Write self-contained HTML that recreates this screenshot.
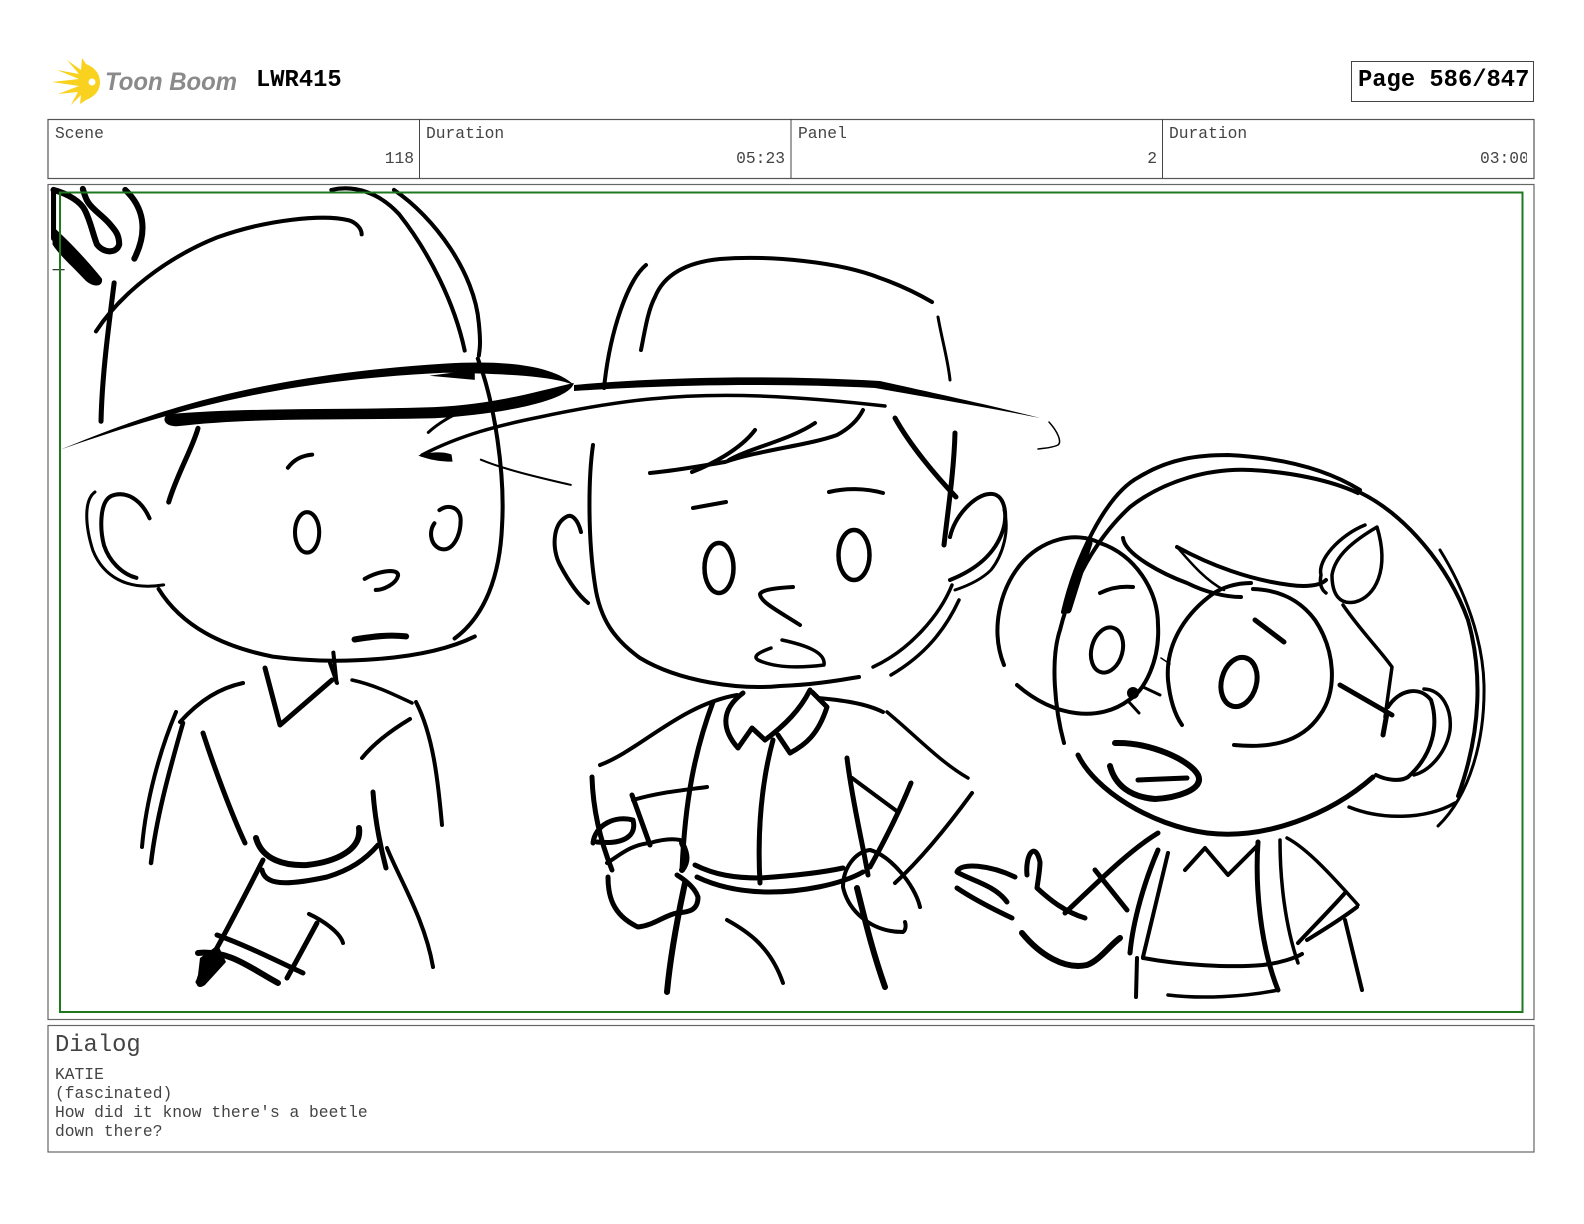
<!DOCTYPE html>
<html lang="en">
<head>
<meta charset="utf-8">
<title>LWR415 Page 586/847</title>
<style>
html,body{margin:0;padding:0;background:#fff;width:1584px;height:1224px;overflow:hidden}
svg{display:block;position:absolute;left:0;top:0}
.t{font-family:"Liberation Mono",monospace;fill:#444;font-size:16.3px}
.b{font-family:"Liberation Mono",monospace;fill:#000;font-size:23.8px;font-weight:bold}
.s{fill:none;stroke:#000;stroke-linecap:round;stroke-linejoin:round}
</style>
</head>
<body>
<svg width="1584" height="1224" viewBox="0 0 1584 1224" xmlns="http://www.w3.org/2000/svg">
<defs><clipPath id="c1"><rect x="1400" y="140" width="127" height="40"/></clipPath></defs>
<rect width="1584" height="1224" fill="#fff"/>

<!-- logo -->
<path fill="#f8d21e" d="M82,58 L86,64 C96,68 100,75 100,82 C100,91 94,97 86,100 L80,104 L81,95 L71,105 L78,92 L58,94 L79,86 L52,82 L79,79 L57,70 L79,74 L67,60 L81,70 Z"/>
<circle cx="92" cy="82" r="3.5" fill="#fff"/>
<text x="105" y="90" font-family="'Liberation Sans',sans-serif" font-style="italic" font-weight="bold" font-size="25" fill="#8a8a8a" textLength="132" lengthAdjust="spacingAndGlyphs">Toon Boom</text>
<text class="b" x="256" y="86">LWR415</text>
<rect x="1351.5" y="61.5" width="182" height="40" fill="none" stroke="#444" stroke-width="1"/>
<text class="b" x="1358" y="86">Page 586/847</text>

<!-- header -->
<rect x="48" y="119.5" width="1486" height="59" fill="none" stroke="#555" stroke-width="1.2"/>
<path d="M419.5,119V178M791,119V178M1162.5,119V178" stroke="#444" stroke-width="1" fill="none"/>
<text class="t" x="55" y="138">Scene</text>
<text class="t" x="414" y="163" text-anchor="end">118</text>
<text class="t" x="426" y="138">Duration</text>
<text class="t" x="785" y="163" text-anchor="end">05:23</text>
<text class="t" x="798" y="138">Panel</text>
<text class="t" x="1157" y="163" text-anchor="end">2</text>
<text class="t" x="1169" y="138">Duration</text>
<g clip-path="url(#c1)"><text class="t" x="1480" y="163">03:00</text></g>

<!-- panel -->
<rect x="48" y="184.5" width="1486" height="835" fill="none" stroke="#666" stroke-width="1.2"/>

<g transform="scale(1.0102)">
<g class="s" stroke-width="6">
<path d="M53,188 C68,192 80,200 84,208 C90,220 92,232 96,242 C102,250 115,252 118,242 C118,232 114,228 108,221 C100,212 92,208 87,200 C84,195 83,190 82,187"/>
<path d="M53,188 V236" stroke-width="5"/>
<path d="M124,188 C142,205 147,228 133,256"/>
<path d="M196,424 C190,445 175,470 167,497" stroke-width="5"/>
<path d="M309,450 C298,451 290,456 285,463" stroke-width="4"/>
</g>
<path fill="#000" d="M52,224 C70,240 90,262 101,276 C102,285 92,284 85,278 C72,264 60,254 52,242Z"/>
<path d="M52,267 H64" stroke="#000" stroke-width="1"/>
<g class="s" stroke-width="4">
<path d="M95,328 C120,290 165,255 215,235 C265,217 320,212 345,218 C352,220 358,226 358,232"/>
<path d="M113,280 C108,320 101,370 100,417" stroke-width="5"/>
<path d="M328,188 C350,183 375,190 395,212 C425,250 450,300 460,347"/>
<path d="M390,188 C430,215 470,270 474,320 C476,340 475,345 474,352"/>
<path d="M473,355 C490,400 500,470 497,520 C495,570 480,610 450,632"/>
<path d="M157,583 C180,620 220,640 270,650 C330,658 420,655 470,630"/>
<path d="M94,487 C83,495 84,520 92,545 C102,570 125,585 162,579" stroke-width="3"/>
<path d="M148,513 C140,495 125,485 110,491 C98,497 99,525 103,540 C108,555 120,568 135,572"/>
<ellipse cx="304" cy="527" rx="12" ry="20"/>
<path d="M430,518 C425,525 425,538 435,543 C448,548 456,530 456,515 C456,503 445,498 435,505"/>
<path d="M361,573 C375,565 395,562 394,570 C392,578 380,584 372,584"/>
<path d="M351,633 C370,630 385,628 402,630" stroke-width="6"/>
<path d="M330,646 L333,675" stroke-width="4"/>
<path d="M476,455 C500,465 535,473 565,480" stroke-width="2"/>
<path d="M424,428 C435,418 450,410 462,405" stroke-width="3"/>
</g>
<path fill="#000" d="M60,445 C150,408 250,372 440,360 C500,356 548,362 568,381 C545,372 500,370 440,369 C300,376 200,396 60,445Z"/>
<path fill="#000" d="M166,410 C250,403 350,406 430,403 C490,400 530,388 568,379 C565,396 500,410 430,414 C340,416 250,413 175,422 C162,422 160,414 166,410Z"/>
<path fill="#000" d="M425,372 L470,366 V376Z"/>
<path fill="#000" d="M414,451 C425,447 440,447 447,450 L448,457 C435,457 425,455 414,451Z"/>
</g>

<!-- everything else, real coords -->
<g class="s" stroke-width="4">
<!-- brim 2 and head 2 -->
<path d="M422,455 C460,435 500,425 540,417 C620,400 680,393 760,396 C810,398 850,402 885,406" stroke-width="3.5"/>
<path d="M646,265 C628,280 610,330 604,388"/>
<path d="M641,350 C645,330 648,310 655,297 C665,272 690,262 720,259 C770,255 840,262 880,278 C900,285 920,295 932,302"/>
<path d="M938,317 C942,340 948,360 950,380" stroke-width="3"/>
<path d="M1049,422 C1058,432 1062,442 1058,445 C1052,448 1045,448 1038,449" stroke-width="1.5"/>
<path d="M593,445 C588,480 588,540 595,585 C600,620 615,640 640,658 C680,682 740,690 780,686 C810,685 835,681 859,677"/>
<path d="M650,473 C680,470 700,466 725,462 C760,450 810,445 837,435 C850,428 858,420 863,410"/>
<path d="M692,472 C710,465 740,450 755,430"/>
<path d="M729,460 C750,448 790,440 815,423"/>
<path d="M895,418 C910,445 935,475 956,497" stroke-width="5"/>
<path d="M955,433 C954,470 948,510 944,545" stroke-width="5"/>
<path d="M950,537 C955,515 975,495 989,494 C1005,492 1008,515 1003,530 C995,555 975,570 950,580"/>
<path d="M1004,510 C1010,530 1003,555 991,570 C983,578 970,585 955,590" stroke-width="3"/>
<path d="M952,585 C940,615 910,650 873,667" stroke-width="3.5"/>
<path d="M959,600 C945,630 925,655 891,675" stroke-width="3.5"/>
<path d="M693,508 L726,502"/>
<path d="M829,492 C845,488 865,488 883,493"/>
<ellipse cx="719" cy="568" rx="14.5" ry="25" stroke-width="4.5"/>
<ellipse cx="854" cy="555" rx="15.5" ry="25" stroke-width="4.5"/>
<path d="M793,587 C775,588 762,590 760,594 C760,602 780,612 800,625"/>
<path d="M771,648 C760,652 752,656 758,660 C775,668 800,668 824,665 C826,652 805,645 782,640" stroke-width="3.5"/>
<path d="M581,532 C578,520 572,513 566,517 C552,525 552,550 560,565 C568,580 578,595 588,603"/>

<!-- body 1 -->
<path d="M265,668 L280,725 L332,680" stroke-width="5"/>
<path d="M330,663 L337,683"/>
<path d="M243,683 C220,688 200,700 180,722"/>
<path d="M176,712 C160,750 146,800 142,847"/>
<path d="M183,723 C168,775 156,820 151,863" stroke-width="4.5"/>
<path d="M352,680 C375,685 395,695 412,703" stroke-width="3.5"/>
<path d="M416,702 C433,735 438,780 442,825"/>
<path d="M410,719 C395,728 375,742 362,758"/>
<path d="M203,733 C215,770 232,815 245,843" stroke-width="5"/>
<path d="M373,792 C375,820 380,845 386,868" stroke-width="5"/>
<path d="M256,838 C262,860 285,866 307,865 C335,862 362,850 359,828" stroke-width="6"/>
<path d="M262,870 C265,885 285,886 327,877 C350,870 365,860 378,845" stroke-width="5"/>
<path d="M387,848 C400,880 425,920 433,967"/>
<path d="M263,860 C245,895 225,935 198,982" stroke-width="5"/>
<path d="M217,935 C245,945 275,960 303,973" stroke-width="5"/>
<path d="M198,953 C230,950 250,968 278,983" stroke-width="6"/>
<path d="M317,923 C305,945 297,960 287,978" stroke-width="5"/>
<path d="M309,914 C322,920 340,932 343,943"/>

<!-- body 2 -->
<path d="M600,765 C640,750 680,705 737,695"/>
<path d="M713,702 C695,750 685,800 682,870" stroke-width="5"/>
<path d="M743,693 C720,710 722,730 738,748 L752,728 L765,740 C785,725 800,710 810,690" stroke-width="5"/>
<path d="M778,735 L790,753 C805,745 818,735 827,707 L812,692" stroke-width="5"/>
<path d="M773,740 C762,780 757,830 760,883" stroke-width="5"/>
<path d="M818,698 C840,700 865,703 883,712"/>
<path d="M887,712 C915,735 940,762 968,778" stroke-width="3.5"/>
<path d="M972,793 C945,830 920,860 895,883"/>
<path d="M847,758 C852,800 862,840 868,875" stroke-width="5"/>
<path d="M852,778 L898,812"/>
<path d="M911,783 C898,815 885,840 870,867" stroke-width="5"/>
<path d="M870,850 C855,852 843,868 843,887 C848,910 870,932 903,932 C906,930 906,925 905,922"/>
<path d="M870,850 C890,855 915,885 920,907"/>
<path d="M857,888 C865,920 872,950 885,987" stroke-width="6"/>
<path d="M695,865 C715,875 735,878 760,878 C790,876 820,873 843,868" stroke-width="5"/>
<path d="M697,877 C720,888 745,892 770,892 C800,892 840,885 863,872" stroke-width="5"/>
<path d="M592,777 C593,810 600,840 612,870" stroke-width="5"/>
<path d="M632,795 L650,845" stroke-width="5"/>
<path d="M633,800 C660,792 685,790 707,787"/>
<path d="M593,843 C595,825 615,815 633,820 C637,835 625,845 597,842" stroke-width="5"/>
<path d="M607,863 C620,855 630,845 650,843 C660,840 670,838 680,840"/>
<path d="M682,843 C688,855 688,862 682,870" stroke-width="6"/>
<path d="M608,877 C608,895 612,915 638,927 C655,925 665,915 677,913 C690,912 698,910 698,897 C695,888 685,880 677,875" stroke-width="5"/>
<path d="M685,883 C677,920 670,960 667,992" stroke-width="6"/>
<path d="M727,920 C745,930 770,945 783,983"/>

<!-- head 3 -->
<path d="M1063,612 C1075,560 1105,495 1139,477 C1170,458 1200,455 1228,455 C1270,457 1320,465 1360,490"/>
<path d="M1064,743 C1055,710 1050,660 1060,630 C1075,570 1105,530 1130,507 C1165,480 1210,468 1251,470 C1290,472 1330,480 1358,493"/>
<path d="M1068,610 L1089,543" stroke-width="7"/>
<path d="M1361,493 C1405,515 1448,565 1468,620 C1482,670 1482,730 1458,796"/>
<path d="M1440,550 C1465,590 1483,640 1484,685 C1485,740 1470,795 1438,826" stroke-width="3"/>
<path d="M1004,665 C990,630 1000,590 1020,565 C1040,540 1075,530 1100,543 C1135,555 1158,590 1158,625 C1160,660 1145,690 1129,700 C1100,722 1055,718 1017,685"/>
<ellipse cx="1107" cy="650" rx="15.5" ry="23" transform="rotate(15 1107 650)"/>
<path d="M1100,593 C1110,588 1122,586 1133,587"/>
<circle cx="1133" cy="693" r="4" fill="#000"/>
<path d="M1143,687 L1160,695 M1129,702 L1139,713" stroke-width="3"/>
<path d="M1161,658 L1170,664" stroke-width="1.5"/>
<path d="M1251,583 C1235,583 1222,588 1214,593 C1190,610 1165,640 1168,680 C1170,700 1175,715 1182,725"/>
<path d="M1253,589 C1280,590 1300,600 1315,620 C1335,650 1338,690 1320,715 C1300,745 1265,748 1234,745"/>
<ellipse cx="1239" cy="682" rx="17.5" ry="25" transform="rotate(15 1239 682)" stroke-width="5"/>
<path d="M1255,620 L1284,642" stroke-width="5"/>
<path d="M1123,538 C1125,555 1165,575 1187,583 C1205,592 1225,597 1241,597"/>
<path d="M1177,547 C1210,565 1250,580 1290,585 C1305,587 1320,586 1326,580"/>
<path d="M1177,547 C1190,562 1205,580 1224,590" stroke-width="2.5"/>
<path d="M1365,525 C1340,535 1317,560 1321,575 C1319,585 1322,590 1326,593" stroke-width="3.5"/>
<path d="M1377,527 C1355,540 1335,555 1332,575 C1332,595 1340,605 1355,602 C1375,597 1390,570 1377,527Z" stroke-width="3.5"/>
<path d="M1343,605 C1360,630 1380,650 1392,667 L1385,717" stroke-width="3.5"/>
<path d="M1340,685 L1392,715" stroke-width="5"/>
<path d="M1383,735 L1387,713" stroke-width="5"/>
<path d="M1388,707 C1399,690 1419,685 1431,700 C1439,725 1433,755 1408,777 C1400,782 1386,780 1376,775"/>
<path d="M1424,689 C1443,690 1452,710 1450,730 C1447,750 1432,770 1414,775" stroke-width="3.5"/>
<path d="M1349,807 C1381,820 1425,820 1455,803" stroke-width="3.5"/>
<path d="M1078,755 C1095,790 1150,825 1207,833 C1265,840 1330,815 1373,777" stroke-width="5"/>
<path d="M1115,743 C1150,742 1190,760 1198,775 C1205,790 1175,798 1155,799 C1130,797 1115,785 1110,766" stroke-width="6"/>
<path d="M1138,780 L1187,778" stroke-width="5"/>

<!-- body 3 -->
<path d="M1185,870 L1205,848 L1228,875 L1256,847"/>
<path d="M1158,833 C1130,850 1100,880 1065,913" stroke-width="5"/>
<path d="M1015,877 C990,865 960,862 957,872 C970,880 995,885 1007,902" stroke-width="5"/>
<path d="M957,888 C975,900 995,910 1012,918" stroke-width="5"/>
<path d="M1027,875 C1025,855 1035,840 1040,862 C1040,870 1038,880 1037,888 C1050,900 1065,912 1085,918" stroke-width="5"/>
<path d="M1095,870 L1127,910" stroke-width="5"/>
<path d="M1022,933 C1040,955 1065,970 1087,965 C1100,960 1110,945 1120,938" stroke-width="6"/>
<path d="M1158,850 C1145,880 1133,920 1130,953" stroke-width="5"/>
<path d="M1168,853 L1143,957"/>
<path d="M1143,958 C1180,965 1230,968 1263,965 C1280,963 1295,958 1302,954"/>
<path d="M1258,842 C1255,885 1260,945 1278,990" stroke-width="5"/>
<path d="M1280,840 C1280,880 1285,925 1298,963" stroke-width="3.5"/>
<path d="M1287,838 C1310,850 1340,885 1358,905" stroke-width="3.5"/>
<path d="M1345,893 C1330,910 1310,930 1298,943"/>
<path d="M1357,907 C1340,920 1320,932 1307,940"/>
<path d="M1345,920 L1362,990"/>
<path d="M1137,958 L1136,997"/>
<path d="M1168,995 C1200,999 1245,997 1278,990" stroke-width="3.5"/>
</g>
<path fill="#000" d="M574,385 C650,378 760,374 880,381 C920,390 990,405 1040,418 C990,408 920,396 875,388 C760,382 650,386 574,391Z"/>
<path fill="#000" d="M200,958 L218,945 L226,962 L205,985 C198,990 194,985 198,975Z"/>

<!-- green safe area, above art -->
<rect x="60" y="192.5" width="1462.5" height="819.5" fill="none" stroke="#1f7a1f" stroke-width="2"/>

<!-- dialog -->
<rect x="48" y="1025.5" width="1486" height="126.5" fill="none" stroke="#666" stroke-width="1.2"/>
<text x="55" y="1051" font-family="'Liberation Mono',monospace" font-size="23.8" fill="#444">Dialog</text>
<text class="t" x="55" y="1079">KATIE</text>
<text class="t" x="55" y="1098">(fascinated)</text>
<text class="t" x="55" y="1117">How did it know there's a beetle</text>
<text class="t" x="55" y="1136">down there?</text>
</svg>
</body>
</html>
